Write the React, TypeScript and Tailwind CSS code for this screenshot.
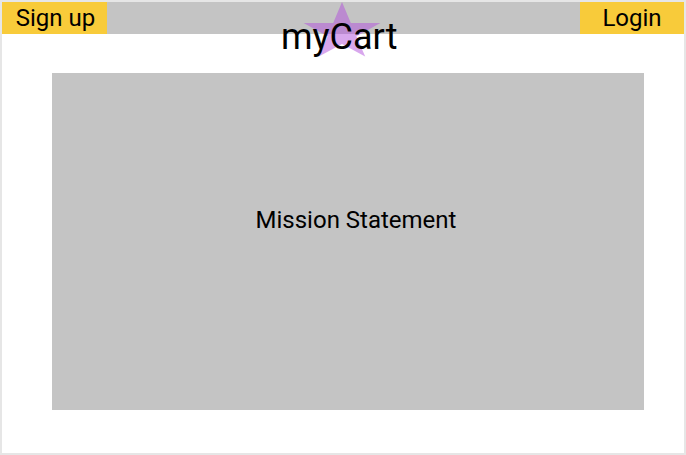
export default function App() {
  return (
    <div className="h-[455px] w-[686px] border-2 border-[#e6e6e6] bg-white font-['Roboto',sans-serif] text-black">
      <header className="relative flex h-[32px] items-stretch justify-between bg-[#c4c4c4]">
        <button className="w-[105px] bg-[#f8cb3a] pl-[2px] text-[24px] leading-[32px]">
          Sign up
        </button>
        <div className="absolute left-[300px] top-0 h-[60px] w-[80px]">
          <svg
            viewBox="0 0 100 100"
            preserveAspectRatio="none"
            className="absolute inset-0 h-full w-full"
          >
            <polygon
              points="50,0 61,35 98,35 68,57 79,91 50,70 21,91 32,57 2,35 39,35"
              fill="rgba(177,79,219,0.5)"
            />
          </svg>
        </div>
        <h1 className="absolute left-[279px] top-[13px] text-[36px] leading-[44px]">
          myCart
        </h1>
        <button className="w-[104px] bg-[#f8cb3a] text-[24px] leading-[32px]">
          Login
        </button>
      </header>
      <main className="ml-[50px] mr-[40px] mt-[39px] flex h-[337px] justify-center bg-[#c4c4c4] pl-[16px] pt-[132px]">
        <p className="text-[24px] leading-[30px]">Mission Statement</p>
      </main>
    </div>
  );
}
